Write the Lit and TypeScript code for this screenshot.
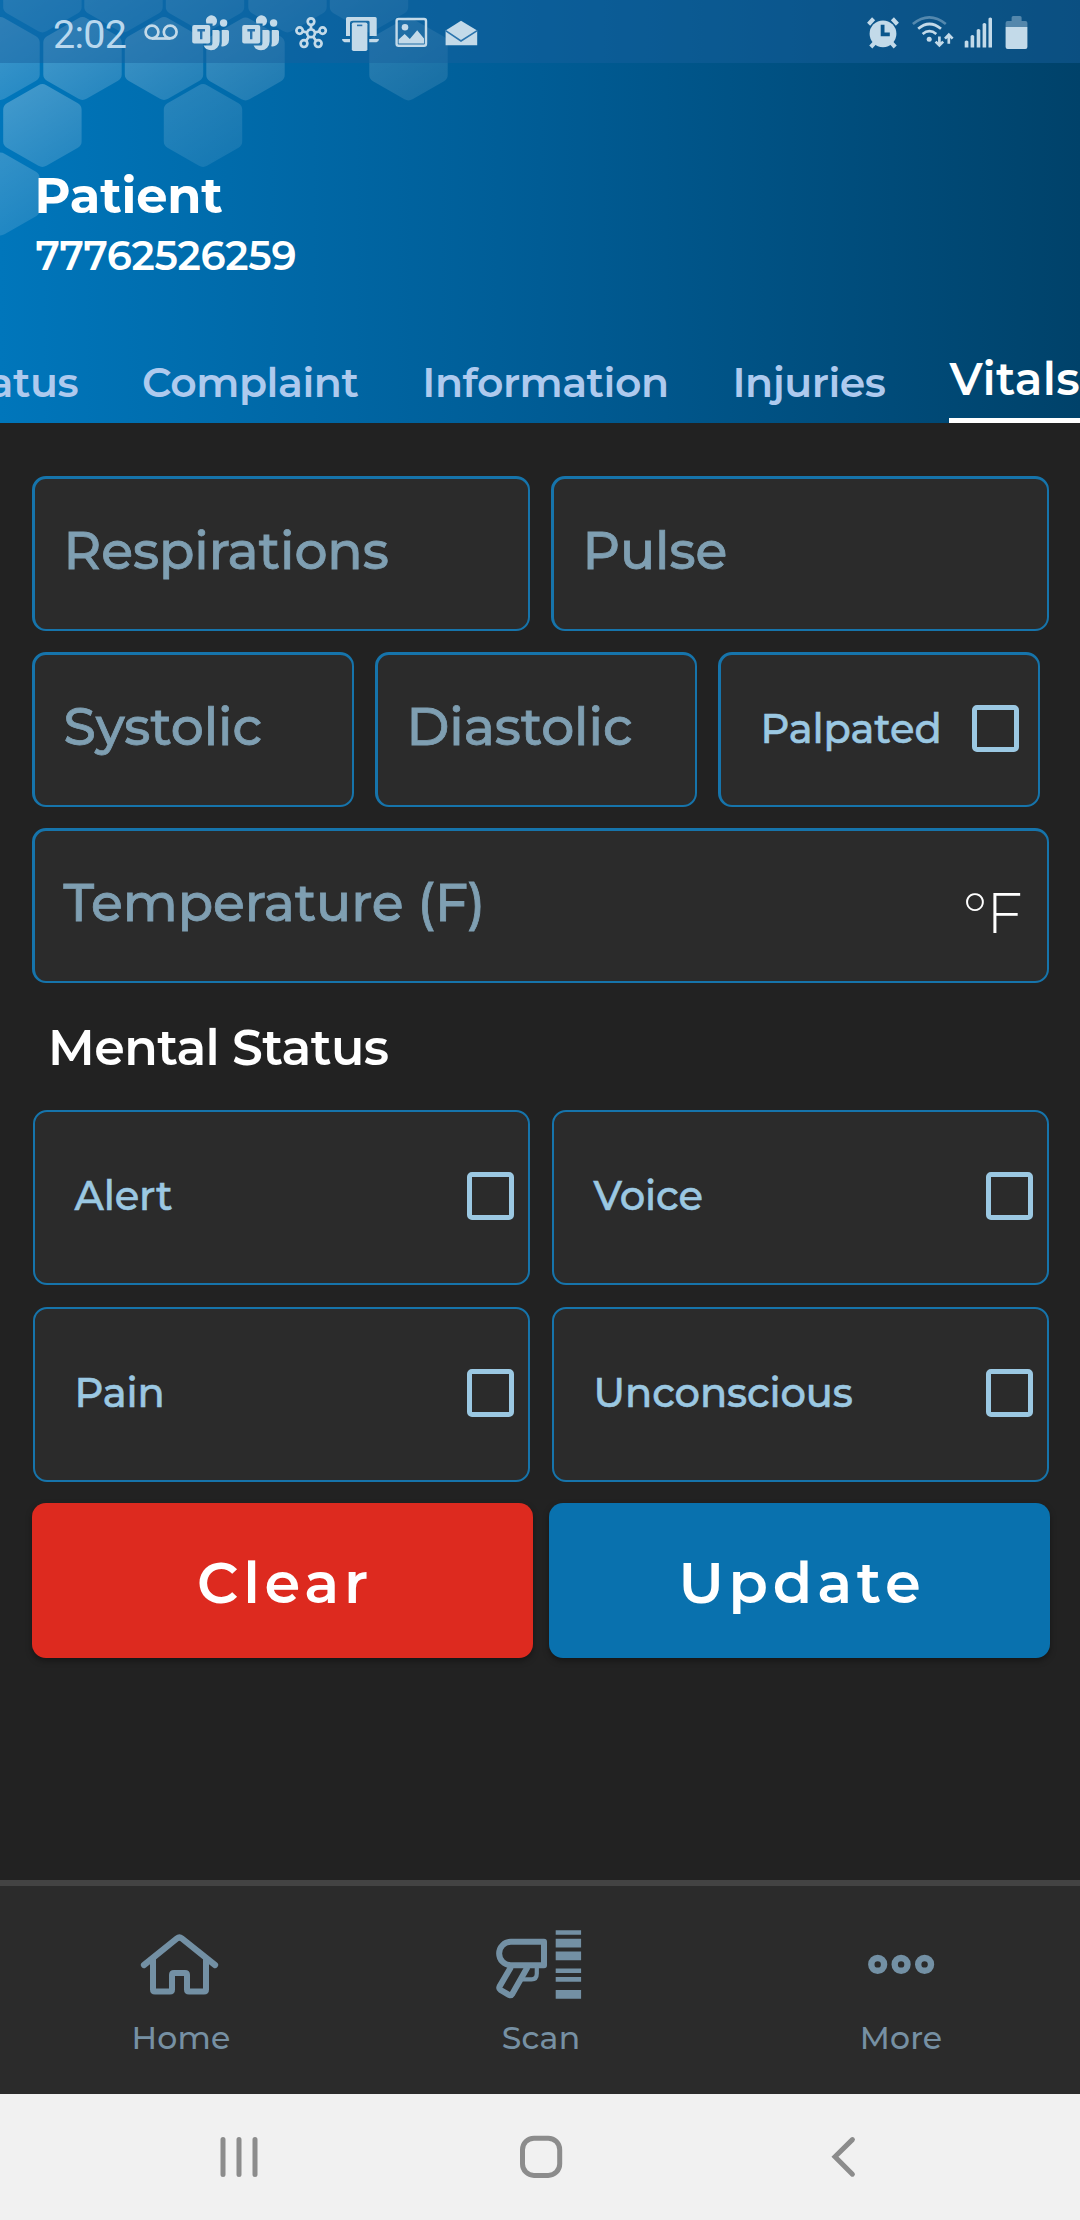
import { LitElement, html, css, svg } from "lit";
import { customElement, property } from "lit/decorators.js";
import { classMap } from "lit/directives/class-map.js";

/* Honeycomb decoration: centre x, centre y, opacity. */
const HEXES: [number, number, number][] = [
  [42.4, -9, 0.19], [123.5, -9, 0.19], [205, -9, 0.18], [287.5, -9, 0.17], [369, -9, 0.15],
  [0.5, 58.5, 0.23], [82.5, 58.5, 0.23], [164, 58.5, 0.21], [245.5, 59, 0.19], [408.5, 59, 0.14],
  [42.4, 125.5, 0.22], [203, 125.5, 0.13],
  [0.5, 194, 0.18],
];

const HEX_PATH =
  "M0 -41.5Q2 -41.5 4 -40.3L35.5 -22.3Q39.2 -20 39.2 -16V16Q39.2 20 35.5 22.3L4 40.3Q0 42.6 -4 40.3L-35.5 22.3Q-39.2 20 -39.2 16V-16Q-39.2 -20 -35.5 -22.3L-4 -40.3Q-2 -41.5 0 -41.5Z";

const honeycomb = svg`
  <defs>
    <linearGradient id="hex" x1="0" y1="0" x2="0.6" y2="1">
      <stop offset="0" stop-color="#fff" stop-opacity="1.0"/>
      <stop offset="1" stop-color="#fff" stop-opacity="0.55"/>
    </linearGradient>
  </defs>
  ${HEXES.map(
    ([x, y, o]) => svg`<path d=${HEX_PATH} transform="translate(${x} ${y})" fill="url(#hex)" opacity=${o * 1.25}/>`,
  )}`;

const teams = (dx: number) => svg`
  <g transform="translate(${dx} 0)">
    <path d="M206.4 23.4a5.6 5.6 0 1 1 8.6 1.9l-2.4 0.6v-2.4z"/>
    <circle cx="223.6" cy="23" r="3.7"/>
    <path d="M212.4 30H218Q219.6 30 219.6 31.6V41.5A8.6 8.6 0 0 1 211 50.2Q205.6 50.2 203.6 45.6H210.4Q212.4 45.6 212.4 43.4Z"/>
    <path d="M221.4 30H227.4Q229 30 229 31.6V40A6.3 6.3 0 0 1 221.2 46.2Q221.8 44.4 221.8 42.5V30Z"/>
    <rect x="192.2" y="25" width="18" height="18.6" rx="2"/>
    <path d="M197.4 30.2H205M201.2 30.2V39.2" class="cut"/>
  </g>`;

const LEFT_ICONS = [
  { x: 136, w: 50, art: svg`
    <g class="line"><circle cx="152" cy="32" r="6.4"/><circle cx="170.2" cy="32" r="6.4"/><path d="M152 38.5H170.2"/></g>` },
  { x: 186, w: 50, art: teams(0) },
  { x: 236, w: 50, art: teams(50) },
  { x: 286, w: 50, art: svg`
    <g class="line thin"><circle cx="311" cy="33.3" r="3.9"/><circle cx="311" cy="21.6" r="3.3"/>
    <circle cx="299.6" cy="30.6" r="3.2"/><circle cx="322.6" cy="30.6" r="3.2"/>
    <circle cx="304" cy="43.6" r="3.4"/><circle cx="318.2" cy="43.6" r="3.4"/>
    <path d="M311 25V29.4M302.7 31.4L307.2 32.5M319.5 31.4L314.9 32.5M306 41L308.8 36.8M316.2 41L313.2 36.8"/></g>` },
  { x: 336, w: 50, art: svg`
    <path d="M346 18.5Q346 17 347.5 17H375.2Q376.7 17 376.7 18.5V36H369.6V22.2Q369.6 20.8 368 20.8H353Q350 20.8 350 23V36H346Z"/>
    <path d="M351.8 24.2Q351.8 22.4 353.6 22.4H365.6Q367.4 22.4 367.4 24.2V49.2Q367.4 51 365.6 51H353.6Q351.8 51 351.8 49.2Z"/>
    <path d="M342 39H350V42.2H344.5Q342 41.6 342 39ZM369.2 39H379Q379 41.6 376.5 42.2H369.2Z"/>
    <path d="M357 25.4H362.3" class="cut slim"/>` },
  { x: 386, w: 50, art: svg`
    <rect class="line slimline" x="396.6" y="19" width="29.4" height="26.8" rx="2"/>
    <circle cx="405" cy="27.2" r="3.3"/>
    <path d="M398.6 43.6V39.4L404.7 34L409.8 39L417.2 30.2L424 38.4V43.6Z"/>` },
  { x: 436, w: 50, art: svg`
    <path d="M461 20.7L477.2 30.4V45.2H445.6V30.4Z"/>
    <path d="M445.6 30.6L461 41L477.2 30.6" class="cut slim"/>` },
];

const RIGHT_ICONS = [
  { x: 860, w: 46, art: svg`
    <circle cx="883" cy="33.8" r="13.4"/>
    <path class="line fat" d="M868.6 24.2L873.6 18.8M897.4 24.2L892.4 18.8M870.8 47L874.8 42.6M895.2 47L891.2 42.6"/>
    <path class="cut" d="M882.6 24.8V34.3H889.8"/>` },
  { x: 906, w: 52, art: svg`
    <circle cx="929.2" cy="39.2" r="2.5"/>
    <g class="line"><path d="M912.9 24Q929.2 10.6 945.8 24" opacity="0.4"/>
    <path d="M918.2 28.8Q929.4 19.2 941 28.8"/><path d="M922.6 34Q929.4 28.4 936.3 34"/></g>
    <path class="line" d="M939.4 36.6V44.6M935.6 41.6L939.4 45.4L943.2 41.6M948.8 43.8V35.4M945 38.6L948.8 34.6L952.6 38.6"/>` },
  { x: 958, w: 40, art: svg`
    <path d="M964.7 41.5Q966.6 39.5 968.4 41.5V47.6H964.7ZM970.6 36Q972.4 34 974.2 36V47.6H970.6ZM976.7 30Q978.5 28 980.3 30V47.6H976.7ZM982.6 24Q984.4 22 986.2 24V47.6H982.6ZM988.5 18.5Q990.3 16.5 992 18.5V47.6H988.5Z"/>` },
  { x: 998, w: 36, art: svg`
    <path opacity="0.4" d="M1005.6 27V23Q1005.6 21 1007.6 21H1011.6V17.6Q1011.6 16 1013.2 16H1020Q1021.6 16 1021.6 17.6V21H1025.4Q1027.4 21 1027.4 23V27Z"/>
    <path d="M1005.6 27H1027.4V47Q1027.4 49 1025.4 49H1007.6Q1005.6 49 1005.6 47Z"/>` },
];

const TAB_ICONS = {
  home: svg`<svg class="icon" width="84" height="76" viewBox="138 1926 84 76" fill="none">
    <path d="M144 1965L177 1938.4Q179.4 1936.6 181.8 1938.4L215 1965" stroke-width="6.2" stroke-linecap="round"/>
    <path d="M153 1959V1989.5Q153 1991.6 155 1991.6H170Q172 1991.6 172 1989.5V1975Q172 1973 174 1973H185Q187 1973 187 1975V1989.5Q187 1991.6 189 1991.6H204Q206 1991.6 206 1989.5V1959" stroke-width="6"/>
  </svg>`,
  scan: svg`<svg class="icon" width="92" height="76" viewBox="494 1926 92 76" fill="none">
    <path d="M544 1941.8V1965.2H510.8A11.7 11.7 0 0 1 510.8 1941.8Z" stroke-width="6" stroke-linejoin="round"/>
    <path d="M511 1967L499.6 1986.4Q498.6 1988.6 500.6 1990L508.8 1994.8Q511 1996 512.4 1993.8L527.6 1967" stroke-width="6"/>
    <path d="M536.8 1967V1973.5Q536.8 1979.4 531.5 1979.4H522.5" stroke-width="4.2"/>
    <path d="M555.7 1930.2h25.4v4.6h-25.4zM555.7 1938.8h25.4v8.6h-25.4zM555.7 1951.6h25.4v8.6h-25.4zM555.7 1968.6h25.4v4.5h-25.4zM555.7 1977.1h25.4v4.6h-25.4zM555.7 1990h25.4v8.7h-25.4z" class="solid"/>
  </svg>`,
  more: svg`<svg class="icon" width="84" height="76" viewBox="858 1926 84 76" fill="none" stroke-width="6.4">
    <circle cx="877.7" cy="1964.4" r="6.4"/><circle cx="901.1" cy="1964.4" r="6.4"/><circle cx="924.6" cy="1964.4" r="6.4"/>
  </svg>`,
};

@customElement("status-bar")
export class StatusBar extends LitElement {
  static styles = css`
    :host { display: flex; height: 63px; background: rgba(24, 96, 157, 0.46); position: relative; }
    .clock { width: 83px; padding-left: 53px; font: 400 39.5px/69px Roboto, sans-serif; letter-spacing: -0.7px; color: #b9d8ee; }
    .space { flex: 1; }
    .pad { width: 46px; }
    svg { display: block; fill: #c3dae9; }
    .line { fill: none; stroke: #c3dae9; stroke-width: 2.7; }
    .thin { stroke-width: 2.7; }
    .slimline { stroke-width: 2.4; }
    .fat { stroke-width: 4.2; stroke-linecap: butt; }
    .cut { fill: none; stroke: #2a74ae; stroke-width: 2.4; }
    .right .cut { stroke: #0a568c; stroke-width: 3.8; }
    .cut.slim { stroke-width: 1.6; }
  `;
  private icons(list: typeof LEFT_ICONS, side: string) {
    return list.map(
      (i) => html`<svg class=${side} width=${i.w} height="63" viewBox="${i.x} 0 ${i.w} 63">${i.art}</svg>`,
    );
  }
  render() {
    return html`
      <span class="clock">2:02</span>
      ${this.icons(LEFT_ICONS, "left")}
      <span class="space"></span>
      ${this.icons(RIGHT_ICONS, "right")}
      <span class="pad"></span>
    `;
  }
}

@customElement("vital-field")
export class VitalField extends LitElement {
  @property() label = "";
  @property() unit = "";
  static styles = css`
    :host {
      display: flex; justify-content: space-between; box-sizing: border-box; height: 155px;
      border: solid #1674ab; border-width: 3px 2px 2px 3px; border-radius: 14px; background: #2b2b2b;
      padding: 0 25px 0 28.5px;
    }
    .label { font-size: 52px; font-weight: 500; line-height: 143px; letter-spacing: -0.1px; -webkit-text-stroke: 0.8px #7f9fb2; color: #7f9fb2; white-space: nowrap; }
    .unit { font-size: 57px; font-weight: 300; line-height: 164px; letter-spacing: -0.4px; color: #fff; }
  `;
  render() {
    return html`<span class="label">${this.label}</span>${this.unit ? html`<span class="unit">${this.unit}</span>` : ""}`;
  }
}

@customElement("check-field")
export class CheckField extends LitElement {
  @property() label = "";
  static styles = css`
    :host {
      display: flex; align-items: center; justify-content: space-between; box-sizing: border-box;
      height: 175px; border: 2px solid #1674ab; border-radius: 14px; background: #2b2b2b;
      padding: 0 14px 3px 39.5px;
    }
    :host([compact]) { height: 155px; border-width: 3px 2px 2px 3px; padding: 0 19px 3px 39.5px; }
    .label { font-size: 40px; font-weight: 500; line-height: 48px; letter-spacing: -0.1px; -webkit-text-stroke: 0.6px #9bc8e2; color: #9bc8e2; }
    .box { box-sizing: border-box; width: 47.5px; height: 47.5px; border: 5.4px solid #9bc8e2; border-radius: 5px; }
  `;
  render() {
    return html`<span class="label">${this.label}</span><span class="box"></span>`;
  }
}

@customElement("app-root")
export class AppRoot extends LitElement {
  static styles = css`
    :host { display: block; font-family: Montserrat, Inter, sans-serif; }
    .page { display: flex; flex-direction: column; width: 1080px; height: 2220px; overflow: hidden; background: #222; }
    header {
      display: flex; flex-direction: column; height: 423px; position: relative;
      background: linear-gradient(90deg, #0076bb 0%, #005c95 50%, #00426a 100%);
    }
    .comb { position: absolute; left: 0; top: 0; }
    .title { display: flex; flex-direction: column; position: relative; padding: 102px 0 0 34.5px; color: #fff; }
    .name { font-size: 49.5px; font-weight: 700; line-height: 60px; letter-spacing: -0.2px; }
    .number { font-size: 40px; font-weight: 600; line-height: 50px; letter-spacing: -0.28px; margin: 6px 0 0 1px; }
    .tabs { display: flex; flex: 1; align-items: flex-end; justify-content: flex-end; overflow: hidden; gap: 63.9px; }
    .tab { font-size: 41px; font-weight: 600; line-height: 50px; padding-bottom: 16px; letter-spacing: -0.45px; color: #aecaee; white-space: nowrap; }
    .tab.on { font-size: 45.5px; font-weight: 600; padding-bottom: 14px; border-bottom: 5px solid #fff; color: #fff; letter-spacing: 0.35px; width: 132px; }
    main { display: flex; flex: 1; flex-direction: column; padding: 53px 30px 0 32px; }
    .vitals { display: flex; flex-direction: column; gap: 21px; }
    .two { display: grid; grid-template-columns: 498px 498px; gap: 21px; }
    .three { display: grid; grid-template-columns: repeat(3, 322px); gap: 21px; }
    .wide { width: 1017px; }
    h2 { margin: 34.5px 0 32.5px 16px; font-size: 49px; font-weight: 600; line-height: 60px; letter-spacing: -0.57px; color: #fff; }
    .mental { display: grid; grid-template-columns: 497px 497px; gap: 22px; padding-left: 1px; }
    .actions { display: grid; grid-template-columns: 501px 501px; gap: 16px; margin-top: 21px; }
    .button {
      height: 155px; border-radius: 14px; box-sizing: border-box; padding-left: 5px; text-align: center;
      font-size: 57.5px; font-weight: 600; line-height: 159px; letter-spacing: 4.8px; color: #fff;
      box-shadow: 0 3px 6px rgba(0, 0, 0, 0.35);
    }
    .clear { background: #dd2a1f; }
    .update { background: #0971ae; }
    .bottom { display: grid; grid-template-columns: repeat(3, 360px); height: 208px; border-top: 6px solid #434343; background: #2b2b2b; }
    .item { display: flex; flex-direction: column; align-items: center; padding-top: 40px; font-size: 31.5px; font-weight: 500; line-height: 40px; letter-spacing: 0.2px; color: #7690a3; }
    .item .label { margin-top: 15.5px; padding-left: 2px; }
    .icon { display: block; stroke: #7390a4; }
    .icon .solid { fill: #7390a4; stroke: none; }
    .system { display: flex; height: 126px; background: #f1f1f1; }
    .system svg { display: block; fill: none; stroke: #8c8c8c; stroke-width: 5; }
  `;

  private tabs = ["Status", "Complaint", "Information", "Injuries", "Vitals"];

  render() {
    return html`
      <div class="page">
        <header>
          <svg class="comb" width="540" height="250" viewBox="0 0 540 250">${honeycomb}</svg>
          <status-bar></status-bar>
          <div class="title">
            <span class="name">Patient</span>
            <span class="number">77762526259</span>
          </div>
          <nav class="tabs">
            ${this.tabs.map((t) => html`<span class=${classMap({ tab: true, on: t === "Vitals" })}>${t}</span>`)}
          </nav>
        </header>
        <main>
          <div class="vitals">
            <div class="two">
              <vital-field label="Respirations"></vital-field>
              <vital-field label="Pulse"></vital-field>
            </div>
            <div class="three">
              <vital-field label="Systolic"></vital-field>
              <vital-field label="Diastolic"></vital-field>
              <check-field compact label="Palpated"></check-field>
            </div>
            <vital-field class="wide" label="Temperature (F)" unit="°F"></vital-field>
          </div>
          <h2>Mental Status</h2>
          <div class="mental">
            ${["Alert", "Voice", "Pain", "Unconscious"].map((l) => html`<check-field label=${l}></check-field>`)}
          </div>
          <div class="actions">
            <div class="button clear">Clear</div>
            <div class="button update">Update</div>
          </div>
        </main>
        <nav class="bottom">
          <div class="item">${TAB_ICONS.home}<span class="label">Home</span></div>
          <div class="item">${TAB_ICONS.scan}<span class="label">Scan</span></div>
          <div class="item">${TAB_ICONS.more}<span class="label">More</span></div>
        </nav>
        <div class="system">
          <svg width="1080" height="126" viewBox="0 2094 1080 126">
            <path d="M223 2139.5V2174.5M239 2139.5V2174.5M255 2139.5V2174.5" stroke-linecap="round"/>
            <rect x="522.5" y="2138.2" width="37.2" height="37.2" rx="11.5"/>
            <path d="M852.4 2139.6L835 2156.8L852.4 2174.2" stroke-linecap="round"/>
          </svg>
        </div>
      </div>
    `;
  }
}
